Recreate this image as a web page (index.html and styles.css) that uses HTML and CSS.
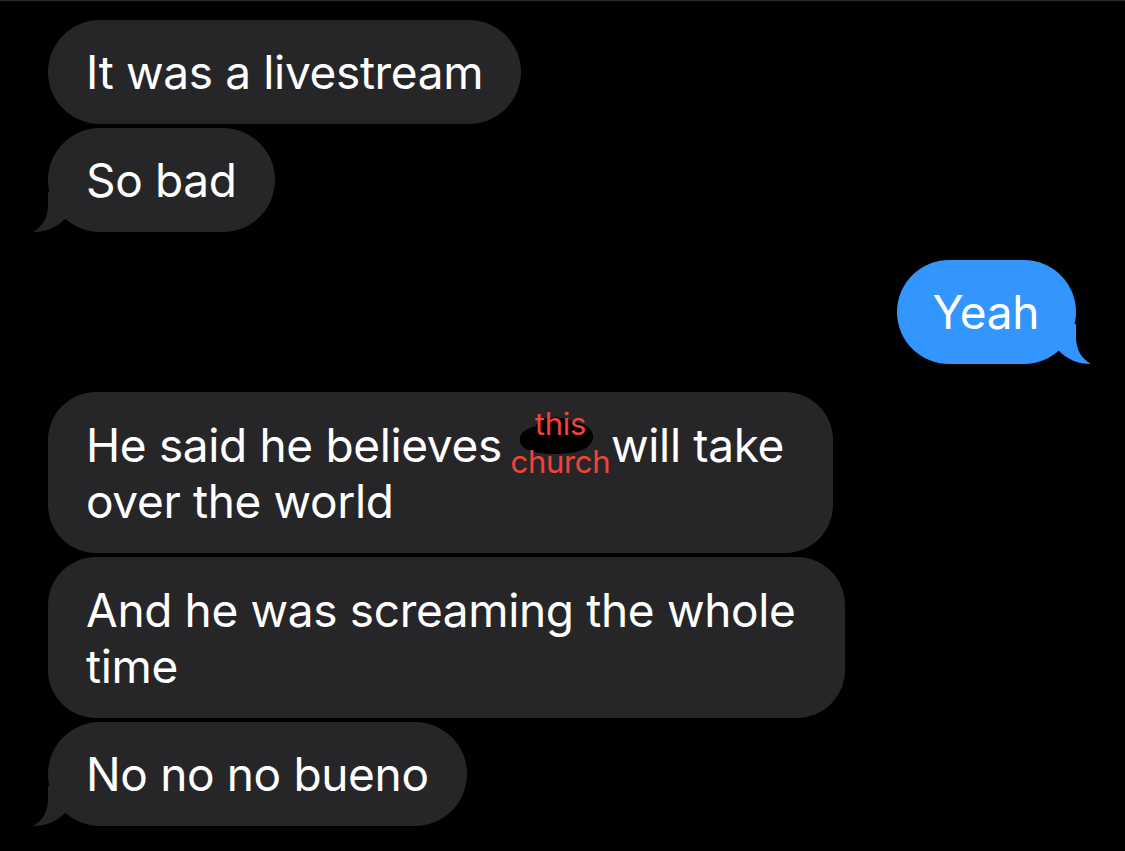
FILE: index.html
```html
<!DOCTYPE html>
<html>
<head>
<meta charset="utf-8">
<link rel="stylesheet" href="styles.css">
</head>
<body>
<div class="thread">
  <div class="row in"><div class="bubble gray">It was a livestream</div></div>
  <div class="row in"><div class="bubble gray">So bad<svg class="tail tl" viewBox="0 0 50 40" width="50" height="40"><path d="M17 0 L17 12 C17 26 12 34 2 40 C14 40 26 36 36 25 L50 25 L50 0 Z"/></svg></div></div>
  <div class="row out gap"><div class="bubble blue">Yeah<svg class="tail tr" viewBox="0 0 50 40" width="50" height="40"><path d="M33 0 L33 12 C33 26 38 34 48 40 C36 40 24 36 14 25 L0 25 L0 0 Z"/></svg></div></div>
  <div class="row in gap"><div class="bubble gray multi">He said he believes <span class="redact"><svg class="blot" viewBox="0 0 80 40" width="80" height="40"><path d="M30 2 C40 0 52 3 60 6 C70 8 78 14 77 22 C76 30 66 36 54 37 C42 39 28 38 18 36 C8 34 2 28 4 21 C6 14 14 12 20 10 C22 6 25 3 30 2 Z"/></svg><span class="note n1">this</span><span class="note n2">church</span></span> will take<br>over the world</div></div>
  <div class="row in"><div class="bubble gray multi">And he was screaming the whole<br>time</div></div>
  <div class="row in"><div class="bubble gray">No no no bueno<svg class="tail tl" viewBox="0 0 50 40" width="50" height="40"><path d="M17 0 L17 12 C17 26 12 34 2 40 C14 40 26 36 36 25 L50 25 L50 0 Z"/></svg></div></div>
</div>
</body>
</html>
```
FILE: styles.css
```css
html, body {
  margin: 0;
  padding: 0;
  background: #000;
}
body {
  border-top: 1px solid #2b2b2d;
  height: 850px;
  overflow: hidden;
  font-family: Inter, "Noto Sans", sans-serif;
}
.thread {
  display: flex;
  flex-direction: column;
  gap: 4px;
  padding: 19px 49px 0 48px;
}
.row {
  display: flex;
}
.row.out {
  justify-content: flex-end;
}
.row.gap {
  margin-top: 24px;
}
.bubble {
  position: relative;
  font-size: 46px;
  line-height: 56px;
  padding: 24px 38px;
  border-radius: 52px;
  color: #fff;
  letter-spacing: -0.35px;
  white-space: nowrap;
}
.bubble.blue {
  padding-left: 35px;
  padding-right: 37px;
}
.bubble.multi {
  padding-right: 49px;
  padding-top: 24.5px;
  padding-bottom: 24.5px;
  border-radius: 48px;
}
.gray {
  background: #262629;
}
.blue {
  background: #3395fe;
}
.tail {
  position: absolute;
  bottom: 0;
}
.tail.tl {
  left: -17px;
  fill: #262629;
}
.tail.tr {
  right: -17px;
  fill: #3395fe;
}
.redact {
  position: relative;
  display: inline-block;
  width: 84px;
  height: 1px;
  vertical-align: baseline;
}
.blot {
  position: absolute;
  left: 2px;
  bottom: 6px;
  fill: #000;
}
.note {
  position: absolute;
  left: -9px;
  width: 110px;
  text-align: center;
  color: #f2423a;
  font-size: 31px;
  line-height: 31px;
  letter-spacing: -0.3px;
}
.n1 {
  bottom: 23px;
}
.n2 {
  bottom: -15px;
}
```
